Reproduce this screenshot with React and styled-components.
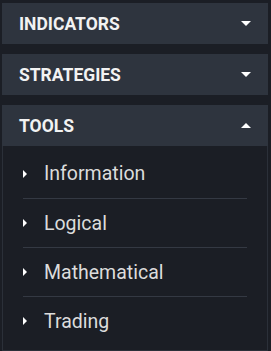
import styled, { createGlobalStyle } from "styled-components";

const GlobalStyle = createGlobalStyle`
    html, body {
        margin: 0;
        padding: 0;
        background-color: #1b1e25;
    }
    body {
        font-family: Roboto, "Liberation Sans", sans-serif;
    }
`

const Painel = styled.div`
    width: 271px;
    height: 351px;
    box-sizing: border-box;
    padding: 3px 3px 0 2px;
    display: flex;
    flex-direction: column;
    gap: 10px;
    overflow: hidden;
`

const Secao = styled.div`
    display: flex;
    flex-direction: column;
`

const Cabecalho = styled.div`
    height: 41px;
    flex-shrink: 0;
    background-color: #2e343e;
    display: flex;
    align-items: center;
    justify-content: space-between;
    padding: 0 17px 0 17px;
    color: #f2f2f2;
    font-weight: 700;
    font-size: 17.5px;
    text-transform: uppercase;
`

const Seta = styled.span`
    width: 0;
    height: 0;
    border-left: 5px solid transparent;
    border-right: 5px solid transparent;
    ${({ $aberto }) => $aberto
        ? 'border-bottom: 5px solid #ffffff;'
        : 'border-top: 5px solid #ffffff;'}
`

const Conteudo = styled.div`
    border: 1px solid #2b3039;
    border-top: none;
    padding: 3px 20px 5px 20px;
    display: flex;
    flex-direction: column;
`

const Item = styled.div`
    height: 49px;
    display: flex;
    align-items: center;
    gap: 17px;
    color: #dcdcdc;
    font-size: 19.5px;
    border-top: ${({ $primeiro }) => $primeiro ? 'none' : '1px solid #343943'};
    box-sizing: border-box;
`

const SetaItem = styled.span`
    width: 0;
    height: 0;
    border-top: 4px solid transparent;
    border-bottom: 4px solid transparent;
    border-left: 4px solid #ffffff;
`

const secoes = [
    { titulo: 'Indicators', aberto: false },
    { titulo: 'Strategies', aberto: false },
    { titulo: 'Tools', aberto: true, itens: ['Information', 'Logical', 'Mathematical', 'Trading'] },
]

export default function App() {
    return (
        <>
            <GlobalStyle />
            <Painel>
                {secoes.map((s) => (
                    <Secao key={s.titulo}>
                        <Cabecalho>
                            <span>{s.titulo}</span>
                            <Seta $aberto={s.aberto} />
                        </Cabecalho>
                        {s.aberto && (
                            <Conteudo>
                                {s.itens.map((item, i) => (
                                    <Item key={item} $primeiro={i === 0}>
                                        <SetaItem />
                                        {item}
                                    </Item>
                                ))}
                            </Conteudo>
                        )}
                    </Secao>
                ))}
            </Painel>
        </>
    )
}
